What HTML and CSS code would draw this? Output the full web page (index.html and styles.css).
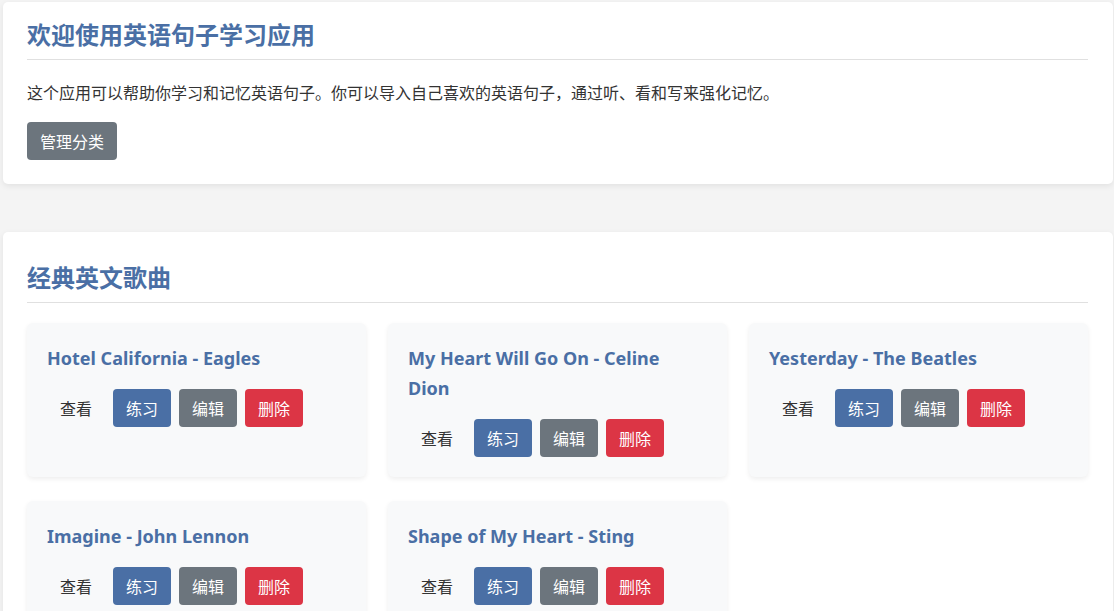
FILE: index.html
```html
<!DOCTYPE html>
<html lang="zh-CN">
<head>
<meta charset="utf-8">
<title>英语句子学习应用</title>
<link rel="stylesheet" href="styles.css">
</head>
<body>
<div class="page">
  <section class="panel intro">
    <h1 class="panel-title">欢迎使用英语句子学习应用</h1>
    <p class="intro-text">这个应用可以帮助你学习和记忆英语句子。你可以导入自己喜欢的英语句子，通过听、看和写来强化记忆。</p>
    <button class="btn btn-grey">管理分类</button>
  </section>

  <section class="panel category">
    <h2 class="panel-title">经典英文歌曲</h2>
    <div class="song-grid">
      <div class="song-card">
        <h3 class="song-title">Hotel California - Eagles</h3>
        <div class="actions">
          <button class="btn btn-plain">查看</button>
          <button class="btn btn-blue">练习</button>
          <button class="btn btn-grey">编辑</button>
          <button class="btn btn-red">删除</button>
        </div>
      </div>
      <div class="song-card">
        <h3 class="song-title">My Heart Will Go On - Celine Dion</h3>
        <div class="actions">
          <button class="btn btn-plain">查看</button>
          <button class="btn btn-blue">练习</button>
          <button class="btn btn-grey">编辑</button>
          <button class="btn btn-red">删除</button>
        </div>
      </div>
      <div class="song-card">
        <h3 class="song-title">Yesterday - The Beatles</h3>
        <div class="actions">
          <button class="btn btn-plain">查看</button>
          <button class="btn btn-blue">练习</button>
          <button class="btn btn-grey">编辑</button>
          <button class="btn btn-red">删除</button>
        </div>
      </div>
      <div class="song-card">
        <h3 class="song-title">Imagine - John Lennon</h3>
        <div class="actions">
          <button class="btn btn-plain">查看</button>
          <button class="btn btn-blue">练习</button>
          <button class="btn btn-grey">编辑</button>
          <button class="btn btn-red">删除</button>
        </div>
      </div>
      <div class="song-card">
        <h3 class="song-title">Shape of My Heart - Sting</h3>
        <div class="actions">
          <button class="btn btn-plain">查看</button>
          <button class="btn btn-blue">练习</button>
          <button class="btn btn-grey">编辑</button>
          <button class="btn btn-red">删除</button>
        </div>
      </div>
    </div>
  </section>
</div>
</body>
</html>
```

FILE: styles.css
```css
* { box-sizing: border-box; }

html, body {
  margin: 0;
  padding: 0;
  background: #f4f4f4;
}

body {
  font-family: "Noto Sans", "Noto Sans CJK SC", sans-serif;
  color: #333;
  font-size: 16px;
}

.page {
  padding: 2px 1px 0 3px;
  display: flex;
  flex-direction: column;
  gap: 48px;
}

.panel {
  background: #fff;
  border-radius: 5px;
  box-shadow: 0 2px 6px rgba(0, 0, 0, 0.08);
  padding: 18px 25px 24px 24px;
}

.panel-title {
  margin: 0 0 20px;
  font-size: 24px;
  line-height: 28px;
  font-weight: 700;
  color: #4a6fa5;
  padding-bottom: 11px;
  border-bottom: 1px solid #e0e0e0;
  font-family: "Noto Sans CJK SC", sans-serif;
}

.intro .panel-title {
  margin-bottom: 18px;
}

.category {
  padding-top: 31px;
}

.intro-text {
  margin: 0 0 16px;
  line-height: 28px;
  font-family: "Noto Sans CJK SC", sans-serif;
  font-size: 16px;
}

.btn {
  border: none;
  border-radius: 4px;
  padding: 8px 13px;
  font-size: 16px;
  line-height: 22px;
  font-family: "Noto Sans CJK SC", sans-serif;
  color: #fff;
  cursor: pointer;
}

.btn-grey { background: #6c757d; }
.btn-blue { background: #4a6fa5; }
.btn-red { background: #dc3545; }
.btn-plain { background: transparent; color: #333; }

.song-grid {
  display: grid;
  grid-template-columns: repeat(3, 1fr);
  gap: 24px 22px;
}

.song-card {
  background: #f8f9fa;
  border-radius: 6px;
  box-shadow: 0 2px 5px rgba(0, 0, 0, 0.07);
  padding: 20px 26px 20px 20px;
}

.song-title {
  margin: 0 0 16px;
  font-size: 18px;
  line-height: 30px;
  font-weight: 700;
  color: #4a6fa5;
}

.actions {
  display: flex;
  gap: 8px;
}
```
